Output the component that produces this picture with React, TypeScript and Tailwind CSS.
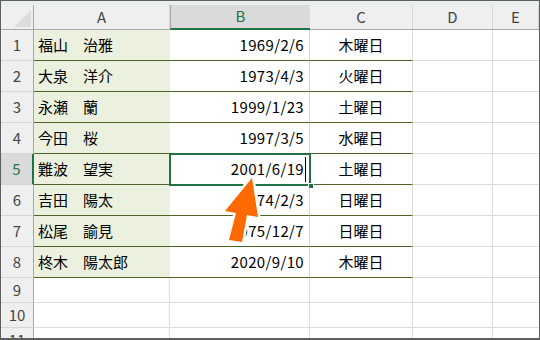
const people = [
  { name: '福山　治雅', date: '1969/2/6', day: '木曜日' },
  { name: '大泉　洋介', date: '1973/4/3', day: '火曜日' },
  { name: '永瀬　蘭', date: '1999/1/23', day: '土曜日' },
  { name: '今田　桜', date: '1997/3/5', day: '水曜日' },
  { name: '難波　望実', date: '2001/6/19', day: '土曜日' },
  { name: '吉田　陽太', date: '1974/2/3', day: '日曜日' },
  { name: '松尾　諭見', date: '1975/12/7', day: '日曜日' },
  { name: '柊木　陽太郎', date: '2020/9/10', day: '木曜日' },
]

const columns = [
  { label: 'A', w: 'w-[136px]' },
  { label: 'B', w: 'w-[140px]' },
  { label: 'C', w: 'w-[103px]' },
  { label: 'D', w: 'w-[80px]' },
  { label: 'E', w: 'flex-1' },
]

export default function App() {
  return (
    <div
      className="relative w-[540px] h-[340px] overflow-hidden bg-white border border-b-2 border-[#5e5e5e] text-[15px] text-black"
      style={{ fontFamily: '"Noto Sans CJK JP", "Noto Sans", sans-serif' }}
    >
      <div className="h-[4px] bg-[#e8edf0]" />

      {/* column headings */}
      <div className="flex h-[25px] bg-[#efefef] border-b border-[#a8a8a8]">
        <div className="relative w-[33px] shrink-0 border-r border-[#a8a8a8]">
          <svg className="absolute inset-0" width="33" height="24">
            <polygon points="13,22 30,5 30,22" fill="#dcdcdc" />
          </svg>
        </div>
        {columns.map((c) =>
          c.label === 'B' ? (
            <div
              key={c.label}
              className={`${c.w} shrink-0 flex items-center justify-center bg-[#dadada] border-l border-[#a5a5a5] border-b-2 border-b-[#217346] text-[#217346] -mb-px`}
            >
              {c.label}
            </div>
          ) : (
            <div
              key={c.label}
              className={`${c.w} shrink-0 flex items-center justify-center border-r border-[#d6d6d6] text-[#444]`}
            >
              {c.label}
            </div>
          )
        )}
      </div>

      {/* data rows */}
      {people.map((p, i) => {
        const sel = i === 4
        return (
          <div key={p.name} className="flex h-[31px]">
            <div
              className={`w-[33px] shrink-0 flex items-center justify-center border-b border-[#d6d6d6] ${
                sel
                  ? 'bg-[#dadada] text-[#217346] border-r-2 border-r-[#217346]'
                  : 'bg-[#efefef] text-[#444] border-r border-r-[#a8a8a8]'
              }`}
            >
              {i + 1}
            </div>
            <div className="w-[136px] shrink-0 flex items-center pl-[4px] bg-[#ebf1de] border-b border-[#4f6228] whitespace-pre">
              {p.name}
            </div>
            <div className="w-[140px] shrink-0 flex items-center justify-end pr-[5px] tracking-[0.35px] border-b border-[#4f6228] border-r border-r-[#d4d4d4]">
              {p.date}
            </div>
            <div className="w-[103px] shrink-0 flex items-center justify-center border-b border-[#4f6228] border-r border-r-[#d9d9d9]">
              {p.day}
            </div>
            <div className="w-[80px] shrink-0 border-b border-r border-[#dcdcdc]" />
            <div className="flex-1 border-b border-[#dcdcdc]" />
          </div>
        )
      })}

      {/* empty rows */}
      {[9, 10, 11].map((n) => (
        <div key={n} className="flex h-[25px]">
          <div className="w-[33px] shrink-0 flex items-center justify-center bg-[#efefef] text-[#444] border-b border-[#d6d6d6] border-r border-r-[#a8a8a8]">
            {n}
          </div>
          <div className="w-[136px] shrink-0 border-b border-r border-[#dcdcdc]" />
          <div className="w-[140px] shrink-0 border-b border-r border-[#dcdcdc]" />
          <div className="w-[103px] shrink-0 border-b border-r border-[#dcdcdc]" />
          <div className="w-[80px] shrink-0 border-b border-r border-[#dcdcdc]" />
          <div className="flex-1 border-b border-[#dcdcdc]" />
        </div>
      ))}

      {/* active cell B5 */}
      <div className="absolute left-[168px] top-[152px] w-[142px] h-[33px] border-2 border-[#217346]" />
      <div className="absolute left-[307px] top-[182px] w-[6px] h-[6px] bg-[#217346] border border-white" />
      <div className="absolute left-[304px] top-[156px] w-px h-[25px] bg-black" />

      {/* arrow */}
      <svg className="absolute inset-0 pointer-events-none" width="540" height="340">
        <polygon
          points="251,177 257,216 246,214 241,241 228,239 235,212 224,210"
          fill="#ff6a00"
          stroke="#ffffff"
          strokeWidth="5"
          strokeLinejoin="round"
          paintOrder="stroke"
        />
      </svg>
    </div>
  )
}
